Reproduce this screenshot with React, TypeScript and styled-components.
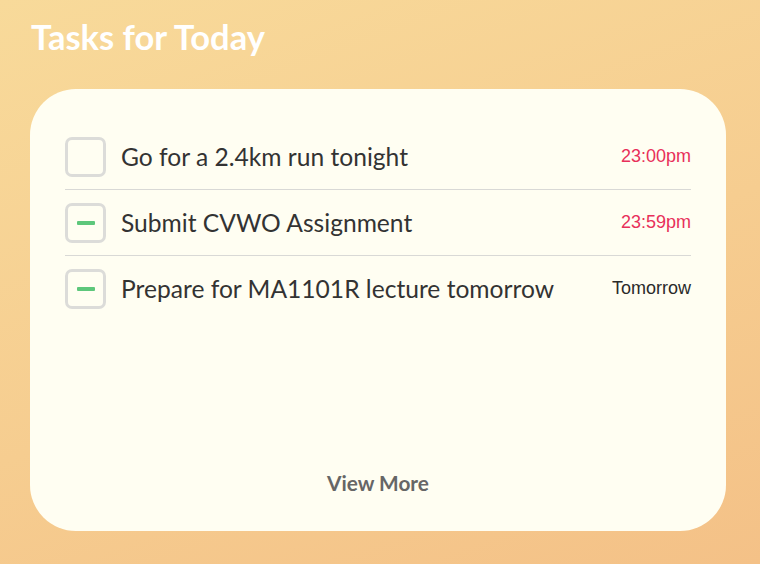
import React from "react";
import styled, { createGlobalStyle } from "styled-components";

const Global = createGlobalStyle`
  html, body { margin: 0; padding: 0; }
  body { font-family: Lato, "Open Sans", sans-serif; }
`;

const Page = styled.div`
  width: 760px;
  height: 564px;
  box-sizing: border-box;
  background: linear-gradient(160deg, #f8da9a 0%, #f6cd90 55%, #f4c187 100%);
  padding: 15px 34px 0 30px;
  overflow: hidden;
`;

const Title = styled.h1`
  margin: 0 0 0 1px;
  font-family: Lato, sans-serif;
  font-weight: 700;
  font-size: 34.5px;
  line-height: 44px;
  color: #ffffff;
`;

const Card = styled.div`
  margin-top: 30px;
  height: 442px;
  box-sizing: border-box;
  background: #fffef2;
  border-radius: 46px;
  padding: 35px 35px 35px 35px;
  display: flex;
  flex-direction: column;
`;

const List = styled.ul`
  list-style: none;
  margin: 0;
  padding: 0;
`;

const Row = styled.li<{ $last?: boolean }>`
  display: flex;
  align-items: center;
  padding: 13px 0 12px;
  border-bottom: ${(p) => (p.$last ? "none" : "1.5px solid #d9d9d6")};
`;

const Box = styled.span`
  flex: none;
  width: 41px;
  height: 40px;
  box-sizing: border-box;
  border: 3px solid #dcdcd9;
  border-radius: 7px;
  display: flex;
  align-items: center;
  justify-content: center;
`;

const Dash = styled.span`
  width: 18px;
  height: 4px;
  border-radius: 1px;
  background: #5dc77b;
`;

const Label = styled.span`
  flex: 1;
  margin-left: 15px;
  font-family: Lato, sans-serif;
  font-size: 24.6px;
  color: #333333;
  white-space: nowrap;
  margin-top: -2px;
`;

const Due = styled.span<{ $urgent?: boolean }>`
  font-family: "Liberation Sans", Arial, sans-serif;
  font-size: 18px;
  color: ${(p) => (p.$urgent ? "#e8305a" : "#2a2a2a")};
  margin-top: -2px;
`;

const More = styled.div`
  margin-top: auto;
  text-align: center;
  font-family: Lato, sans-serif;
  font-weight: 700;
  font-size: 20.8px;
  color: #666666;
  line-height: 24px;
  margin-bottom: 1px;
`;

const tasks = [
  { label: "Go for a 2.4km run tonight", due: "23:00pm", urgent: true, partial: false },
  { label: "Submit CVWO Assignment", due: "23:59pm", urgent: true, partial: true },
  { label: "Prepare for MA1101R lecture tomorrow", due: "Tomorrow", urgent: false, partial: true },
];

export default function App() {
  return (
    <Page>
      <Global />
      <Title>Tasks for Today</Title>
      <Card>
        <List>
          {tasks.map((t, i) => (
            <Row key={t.label} $last={i === tasks.length - 1}>
              <Box>{t.partial && <Dash />}</Box>
              <Label>{t.label}</Label>
              <Due $urgent={t.urgent}>{t.due}</Due>
            </Row>
          ))}
        </List>
        <More>View More</More>
      </Card>
    </Page>
  );
}
